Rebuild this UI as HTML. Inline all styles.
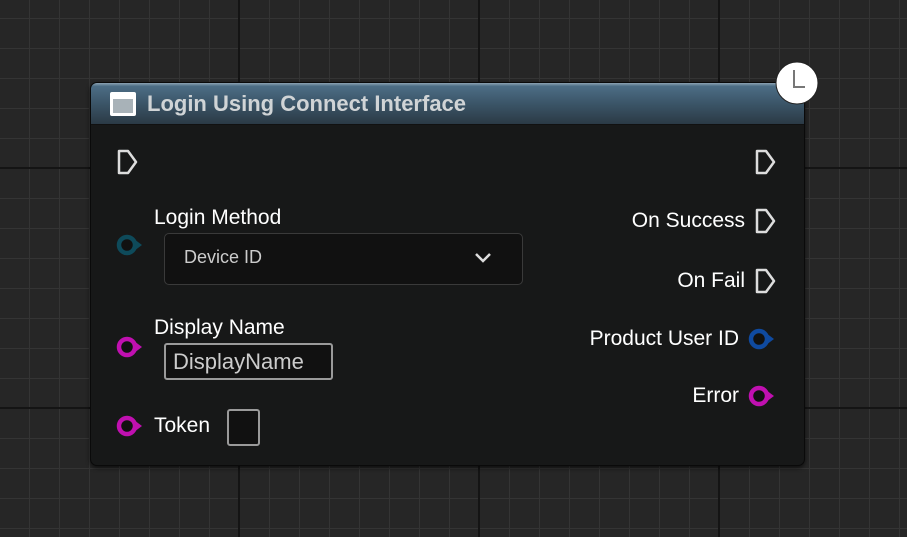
<!DOCTYPE html>
<html><head><style>
body{margin:0;width:907px;height:537px;overflow:hidden;background:#262626;font-family:"Liberation Sans",sans-serif;position:relative}
.grid{position:absolute;inset:0;background-image:
linear-gradient(90deg,#141414 2px,transparent 2px),
linear-gradient(#141414 2px,transparent 2px),
linear-gradient(90deg,#343434 1px,transparent 1px),
linear-gradient(#343434 1px,transparent 1px);
background-size:240px 240px,240px 240px,30px 30px,30px 30px;
background-position:238px 0,0 167px,29px 0,0 18px}
.node{position:absolute;left:90px;top:82px;width:713px;height:382px;background:#171818;border-radius:7px;border:1px solid #0a0a0a;box-shadow:0 2px 4px rgba(0,0,0,.6);overflow:hidden}
.hdr{position:absolute;left:0;top:0;right:0;height:41px;background:linear-gradient(180deg,#8ba2b3 0,#4c6d85 8%,#3b5568 50%,#2b3a45 100%);border-bottom:1px solid #111}
.t{position:absolute;color:#fff;font-size:21px;white-space:nowrap}
.r{text-align:right}
.ttl{position:absolute;left:56px;top:8px;color:#d0d4d6;font-size:22px;font-weight:bold}
.ic{position:absolute;left:19px;top:9px;width:26px;height:24px;background:#fff;border-radius:2px}
.ic:after{content:"";position:absolute;left:3px;top:7px;width:20px;height:14px;background:#a8b2b8}
svg{position:absolute}
.dd{position:absolute;left:73px;top:150px;width:357px;height:50px;border:1px solid #3a3a3a;border-radius:5px;background:#111}
.box{position:absolute;border:2px solid #9a9a9a;border-radius:3px;background:#111}
</style></head><body>
<div class="grid"></div>
<div class="node">
<div class="hdr"><div class="ic"></div><div class="ttl">Login Using Connect Interface</div></div>
<svg style="left:25px;top:65px" width="24" height="28"><path d="M3 3H12L20 14L12 25H3Z" fill="none" stroke="#ddd" stroke-width="2.5" stroke-linejoin="round"/></svg>
<svg style="left:663px;top:65px" width="24" height="28"><path d="M3 3H12L20 14L12 25H3Z" fill="none" stroke="#ddd" stroke-width="2.5" stroke-linejoin="round"/></svg>
<svg style="left:663px;top:124px" width="24" height="28"><path d="M3 3H12L20 14L12 25H3Z" fill="none" stroke="#ddd" stroke-width="2.5" stroke-linejoin="round"/></svg>
<svg style="left:663px;top:184px" width="24" height="28"><path d="M3 3H12L20 14L12 25H3Z" fill="none" stroke="#ddd" stroke-width="2.5" stroke-linejoin="round"/></svg>
<div class="t" style="left:63px;top:123px">Login Method</div>
<svg style="left:24px;top:150px" width="32" height="24"><circle cx="12" cy="12" r="8" fill="#111" stroke="#0e4a5a" stroke-width="4.5"/><path d="M21 7.5L27 12L21 16.5Z" fill="#0e4a5a"/></svg>
<div class="dd"><div class="t" style="left:19px;top:13px;font-size:18px;color:#ccc">Device ID</div>
<svg style="left:309px;top:18px" width="18" height="12"><path d="M2 2L9 9L16 2" fill="none" stroke="#ddd" stroke-width="2.5"/></svg></div>
<div class="t r" style="right:59px;top:126px">On Success</div>
<div class="t r" style="right:59px;top:186px">On Fail</div>
<div class="t r" style="right:65px;top:244px">Product User ID</div>
<div class="t r" style="right:65px;top:301px">Error</div>
<svg style="left:656px;top:244px" width="32" height="24"><circle cx="12" cy="12" r="8" fill="#111" stroke="#0f4aa0" stroke-width="4.5"/><path d="M21 7.5L27 12L21 16.5Z" fill="#0f4aa0"/></svg>
<svg style="left:656px;top:301px" width="32" height="24"><circle cx="12" cy="12" r="8" fill="#111" stroke="#c010b0" stroke-width="4.5"/><path d="M21 7.5L27 12L21 16.5Z" fill="#c010b0"/></svg>
<div class="t" style="left:63px;top:233px">Display Name</div>
<svg style="left:24px;top:252px" width="32" height="24"><circle cx="12" cy="12" r="8" fill="#111" stroke="#c010b0" stroke-width="4.5"/><path d="M21 7.5L27 12L21 16.5Z" fill="#c010b0"/></svg>
<div class="box" style="left:73px;top:260px;width:165px;height:33px"><div class="t" style="left:7px;top:4px;color:#ccc;font-size:22px">DisplayName</div></div>
<svg style="left:24px;top:331px" width="32" height="24"><circle cx="12" cy="12" r="8" fill="#111" stroke="#c010b0" stroke-width="4.5"/><path d="M21 7.5L27 12L21 16.5Z" fill="#c010b0"/></svg>
<div class="t" style="left:63px;top:331px">Token</div>
<div class="box" style="left:136px;top:326px;width:29px;height:33px"></div>
</div>
<svg style="left:774px;top:60px" width="46" height="46"><circle cx="23" cy="23" r="21" fill="#fff" stroke="#222" stroke-width="1"/><path d="M20 10V27H31" fill="none" stroke="#777" stroke-width="2"/></svg>
</body></html>
